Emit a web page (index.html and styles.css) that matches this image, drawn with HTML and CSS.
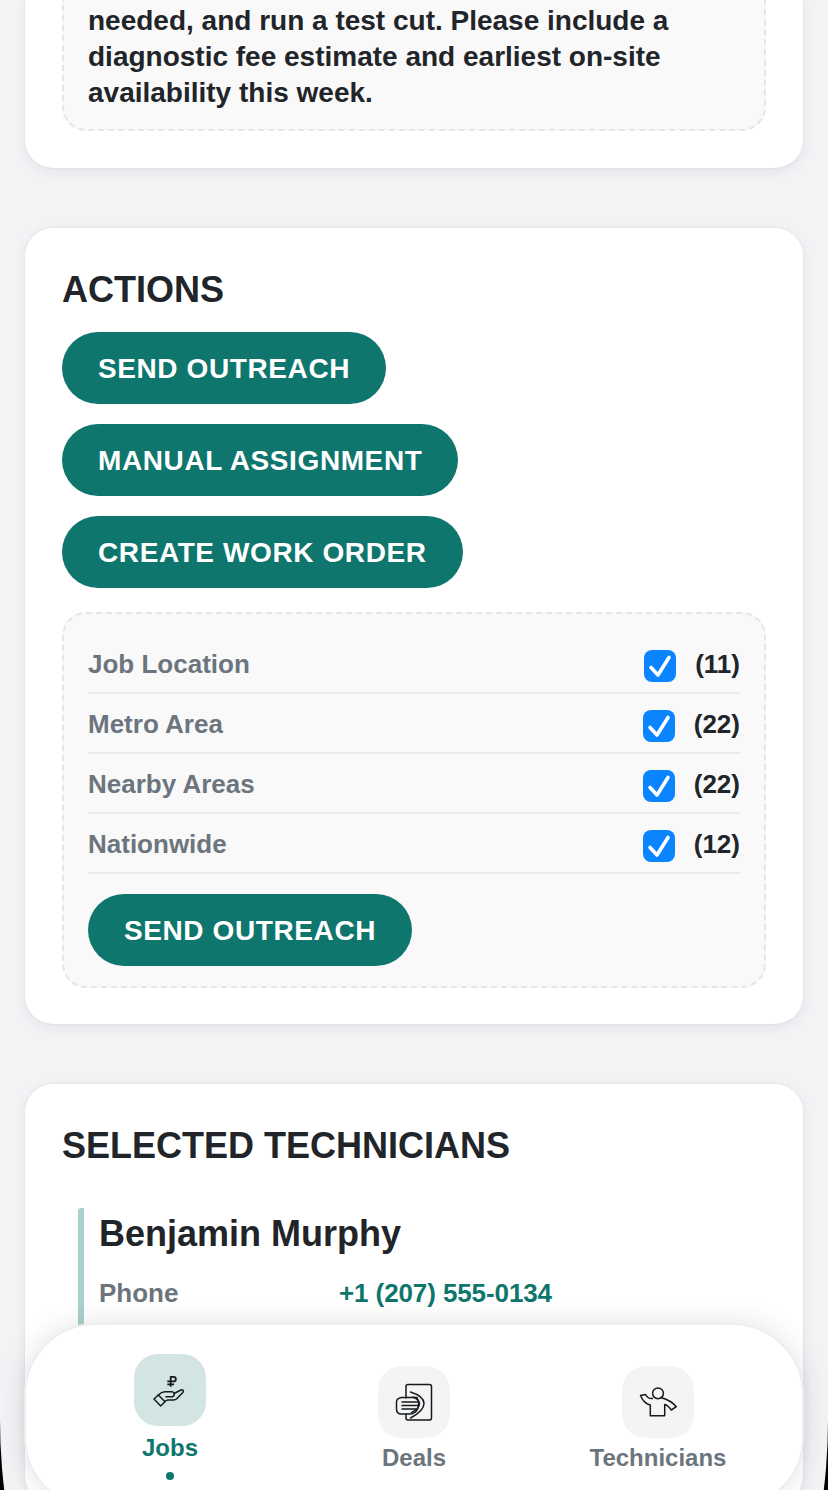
FILE: index.html
```html
<!DOCTYPE html>
<html lang="en">
<head>
<meta charset="utf-8">
<title>Job details</title>
<link rel="stylesheet" href="styles.css">
</head>
<body>
<div class="screen">
  <main class="page">
    <section class="card card-cut">
      <div class="dashed note">needed, and run a test cut. Please include a diagnostic fee estimate and earliest on-site availability this week.</div>
    </section>
    <section class="card card-actions">
      <h2 class="title">ACTIONS</h2>
      <div class="btns">
        <button class="btn">SEND OUTREACH</button>
        <button class="btn">MANUAL ASSIGNMENT</button>
        <button class="btn">CREATE WORK ORDER</button>
      </div>
      <div class="dashed outreach">
        <div class="row"><span class="row-label">Job Location</span><span class="check"><svg viewBox="0 0 32 32"><path d="M7 17.500l7 7.500L25 7.500"/></svg></span><span class="count">(11)</span></div>
        <div class="row"><span class="row-label">Metro Area</span><span class="check"><svg viewBox="0 0 32 32"><path d="M7 17.500l7 7.500L25 7.500"/></svg></span><span class="count">(22)</span></div>
        <div class="row"><span class="row-label">Nearby Areas</span><span class="check"><svg viewBox="0 0 32 32"><path d="M7 17.500l7 7.500L25 7.500"/></svg></span><span class="count">(22)</span></div>
        <div class="row"><span class="row-label">Nationwide</span><span class="check"><svg viewBox="0 0 32 32"><path d="M7 17.500l7 7.500L25 7.500"/></svg></span><span class="count">(12)</span></div>
        <button class="btn btn-send">SEND OUTREACH</button>
      </div>
    </section>
    <section class="card card-tech">
      <h2 class="title">SELECTED TECHNICIANS</h2>
      <div class="tech">
        <h3 class="tech-name">Benjamin Murphy</h3>
        <div class="tech-row"><span class="tech-label">Phone</span><span class="tech-value">+1 (207) 555-0134</span></div>
      </div>
    </section>
  </main>
  <nav class="nav">
    <div class="tab tab-active">
      <span class="tab-icon">
        <svg viewBox="0 0 36 36" class="ico"><path class="thin" d="M6.300 23c2-2 4-3.300 6.500-3.300h7c2.500 0 3.500 3.500 1 5H14"/><path class="thin" d="M22 21.500l7-3.500c2-.8 3 1 1.800 2.500L25 26.500c-1 1-2 1.500-3.500 1.500H16c-1 0-2 .5-3 1.500"/><path class="thin" d="M2 27l4.300-4 6.700 6.700-4.300 4.300z"/><path class="bold" d="M18.700 14.800V4.900h2.900a2.250 2.250 0 0 1 0 4.500h-6.300M15.300 12.400H22"/></svg>
      </span>
      <span class="tab-label">Jobs</span>
      <span class="dot"></span>
    </div>
    <div class="tab">
      <span class="tab-icon">
        <svg viewBox="0 0 36 36" class="ico"><path class="thin" d="M10 14V2.500A2 2 0 0 1 12 .5h21.500a2 2 0 0 1 2 2V34a2 2 0 0 1-2 2H12a2 2 0 0 1-2-2v-4"/><path class="thin" d="M14.500 8c8 2.500 13.500 6.500 13.500 11.500S22 30 14.500 34"/><path class="thin" d="M17 13c4.500 2 6.500 4 6.500 6.500 0 3-3 7-8 9"/><path class="thin" d="M21 13.500H5.500C2 14 .5 16 .5 18v7c0 3 2 5 5 5H14c4 0 7-3 8-6 1-3 .5-7-1-10.500z"/><path class="thin" d="M6 18h15M6 21.500h16M6 25h14"/></svg>
      </span>
      <span class="tab-label">Deals</span>
    </div>
    <div class="tab">
      <span class="tab-icon">
        <svg viewBox="0 0 36 36" class="ico"><circle class="thin" cx="18" cy="9.300" r="5.400"/><path class="thin" d="M12.500 14.500c-3.500.3-5.500-1-7-4L.5 11.500c1.500 3.500 4.500 8.500 9.800 9.500v10.700h14.400V20.500c2.600.3 4.800 3 6.600 5.500l5-3.300c-2.500-3-6-6.700-14.800-9"/></svg>
      </span>
      <span class="tab-label">Technicians</span>
    </div>
  </nav>
  <div class="bezel"></div>
</div>
</body>
</html>
```

FILE: styles.css
```css
* { box-sizing: border-box; }
html, body { margin: 0; padding: 0; }
body {
  width: 828px;
  height: 1490px;
  overflow: hidden;
  background: #f2f3f5;
  font-family: "Liberation Sans", Arial, sans-serif;
  color: #212529;
}
.screen {
  position: relative;
  width: 828px;
  height: 1490px;
  overflow: hidden;
  background: #f2f3f5;
}
.page {
  display: flex;
  flex-direction: column;
  gap: 60px;
  padding: 0 25px;
}
.card {
  background: #fff;
  border-radius: 28px;
  padding: 37px;
  box-shadow: 0 3px 12px rgba(30, 40, 60, 0.08), 0 0 0 1px rgba(30, 40, 60, 0.025);
}
.card-cut {
  height: 168px;
  padding-top: 0;
  border-radius: 0 0 28px 28px;
}
.dashed {
  background: #f9f9fa;
  border: 2px dashed #e5e6e8;
  border-radius: 24px;
}
.note {
  height: 131px;
  padding: 3px 24px 0;
  border-top: 0;
  border-radius: 0 0 24px 24px;
  font-size: 28px;
  line-height: 36px;
  font-weight: 700;
}
.title {
  margin: 0;
  font-size: 36px;
  line-height: 42px;
  font-weight: 700;
}
.card-actions { height: 796px; padding-top: 41px; }
.btns {
  display: flex;
  flex-direction: column;
  align-items: flex-start;
  gap: 20px;
  margin-top: 21px;
}
.btn {
  height: 72px;
  padding: 2px 36px 0;
  border: 0;
  border-radius: 36px;
  background: #0f766e;
  color: #fff;
  font-family: inherit;
  font-size: 28px;
  font-weight: 700;
  letter-spacing: 0.6px;
}
.outreach {
  margin-top: 24px;
  padding: 20px 24px 20px;
}
.row {
  display: flex;
  align-items: center;
  height: 60px;
  padding-top: 2px;
  border-bottom: 2px solid #e9e9eb;
}
.row-label {
  flex: 1;
  font-size: 26px;
  font-weight: 700;
  color: #6c757d;
}
.check {
  display: flex;
  width: 32px;
  height: 32px;
  margin-top: 4px;
  border-radius: 8px;
  background: #0a84ff;
}
.check svg { width: 32px; height: 32px; }
.check path {
  fill: none;
  stroke: #fff;
  stroke-width: 3.6;
  stroke-linecap: round;
  stroke-linejoin: round;
}
.count {
  margin-left: 19px;
  font-size: 26px;
  font-weight: 700;
  text-align: right;
}
.btn-send { margin-top: 20px; }
.card-tech { padding-top: 41px; height: 420px; }
.tech {
  margin: 41px 0 0 16px;
  padding: 1px 0 60px 15px;
  border-left: 6px solid #a9d1cd;
  border-radius: 3px 0 0 3px;
}
.tech-name {
  margin: 0;
  font-size: 36px;
  line-height: 50px;
  font-weight: 700;
}
.tech-row {
  display: flex;
  margin-top: 16px;
  font-size: 26px;
  font-weight: 700;
  line-height: 36px;
}
.tech-label { width: 240px; color: #6c757d; }
.tech-value { color: #0f766e; letter-spacing: -0.1px; }
.nav {
  position: absolute;
  left: 24px;
  top: 1323px;
  width: 780px;
  height: 186px;
  display: grid;
  grid-template-columns: repeat(3, 244px);
  justify-content: center;
  background: #fff;
  border: 2px solid #eeeeef;
  border-radius: 72px;
  box-shadow: 0 0 28px rgba(30, 40, 60, 0.13);
}
.tab {
  display: flex;
  flex-direction: column;
  align-items: center;
  padding-top: 41px;
}
.tab-active { padding-top: 29px; }
.tab-icon {
  display: flex;
  align-items: center;
  justify-content: center;
  width: 72px;
  height: 72px;
  border-radius: 24px;
  background: #f4f4f5;
}
.tab-active .tab-icon { background: #d3e5e2; }
.ico { width: 36px; height: 36px; overflow: visible; }
.thin, .bold {
  fill: none;
  stroke: #15181c;
  stroke-width: 1.5;
  stroke-linejoin: round;
  stroke-linecap: round;
}
.bold { stroke-width: 1.8; stroke-linecap: butt; }
.tab-label {
  margin-top: 4px;
  font-size: 24px;
  line-height: 32px;
  font-weight: 700;
  color: #6c757d;
}
.tab-active .tab-label { margin-top: 6px; color: #0f766e; }
.dot {
  width: 8px;
  height: 8px;
  margin-top: 8px;
  border-radius: 50%;
  background: #0f766e;
}
.bezel {
  position: absolute;
  left: 0;
  top: 0;
  width: 828px;
  height: 1910px;
  border-radius: 0 0 414px 414px / 0 0 490px 490px;
  box-shadow: 0 0 6px 30px #000;
  pointer-events: none;
}
```
